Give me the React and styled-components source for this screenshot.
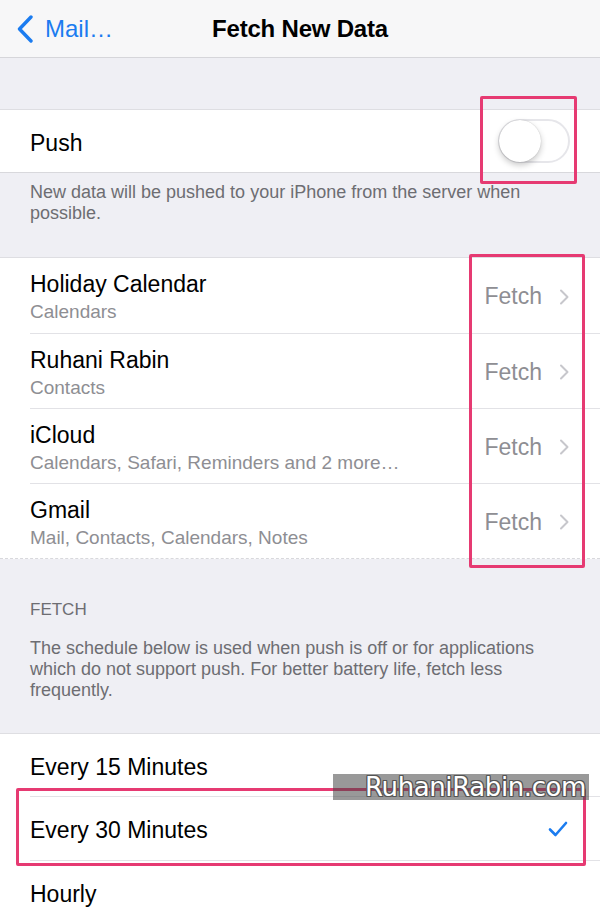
import React from 'react';
import styled, { createGlobalStyle } from 'styled-components';

const GlobalStyle = createGlobalStyle`
    html, body {
        margin: 0;
        padding: 0;
        background: #efeff4;
    }
    body {
        font-family: "Liberation Sans", Arial, sans-serif;
        -webkit-font-smoothing: antialiased;
    }
`;

const accounts = [
    { name: 'Holiday Calendar', detail: 'Calendars' },
    { name: 'Ruhani Rabin', detail: 'Contacts' },
    { name: 'iCloud', detail: 'Calendars, Safari, Reminders and 2 more…' },
    { name: 'Gmail', detail: 'Mail, Contacts, Calendars, Notes' },
];

const schedules = [
    { label: 'Every 15 Minutes' },
    { label: 'Every 30 Minutes', checked: true },
    { label: 'Hourly' },
];

const BackChevron = () => (
    <svg width="18" height="28" viewBox="0 0 18 28">
        <path d="M15 2 L3.5 14 L15 26" fill="none" stroke="#1b7cf0" strokeWidth="3.4" strokeLinecap="round" strokeLinejoin="round" />
    </svg>
);

const Disclosure = () => (
    <svg width="10" height="16" viewBox="0 0 10 16">
        <path d="M2 1.5 L8.5 8 L2 14.5" fill="none" stroke="#c7c7cc" strokeWidth="2" strokeLinecap="round" strokeLinejoin="round" />
    </svg>
);

const Check = () => (
    <svg width="20" height="16" viewBox="0 0 20 16">
        <path d="M2 8.5 L7.5 14 L18 2" fill="none" stroke="#1b7cf0" strokeWidth="2.6" strokeLinecap="round" strokeLinejoin="round" />
    </svg>
);

const App = () => {
    return (
        <Page>
            <GlobalStyle />
            <NavBar>
                <BackButton><BackChevron /><span>Mail…</span></BackButton>
                <Title>Fetch New Data</Title>
            </NavBar>

            <Group $top={51}>
                <PlainRow>
                    <RowLabel>Push</RowLabel>
                    <Toggle><Knob /></Toggle>
                </PlainRow>
            </Group>
            <GroupFooter $top={9} $bottom={33}>
                New data will be pushed to your iPhone from the server when possible.
            </GroupFooter>

            <Group $dashed>
                {accounts.map((a) => (
                    <AccountRow key={a.name}>
                        <div>
                            <RowLabel>{a.name}</RowLabel>
                            <Detail>{a.detail}</Detail>
                        </div>
                        <Value>Fetch <Disclosure /></Value>
                    </AccountRow>
                ))}
            </Group>

            <SectionHeader>FETCH</SectionHeader>
            <GroupFooter $top={17} $bottom={32}>
                The schedule below is used when push is off or for applications which do not support push. For better battery life, fetch less frequently.
            </GroupFooter>

            <Group>
                {schedules.map((s) => (
                    <PlainRow key={s.label}>
                        <RowLabel>{s.label}</RowLabel>
                        {s.checked && <Check />}
                    </PlainRow>
                ))}
            </Group>

            <Highlight style={{ left: 480, top: 96, width: 97, height: 88 }} />
            <Highlight style={{ left: 469, top: 254, width: 116, height: 314 }} />
            <Highlight style={{ left: 16, top: 788, width: 570, height: 78 }} />
            <Watermark>RuhaniRabin.com</Watermark>
        </Page>
    );
};

export default App;

const Page = styled.div`
    position: relative;
    width: 600px;
    height: 924px;
    overflow: hidden;
    background: #efeff4;
`;

const NavBar = styled.header`
    position: relative;
    height: 58px;
    background: #f7f7f8;
    border-bottom: 1px solid #d6d6da;
    box-sizing: border-box;
    display: flex;
    align-items: center;
    justify-content: center;
`;

const BackButton = styled.div`
    position: absolute;
    left: 16px;
    top: 0;
    bottom: 0;
    display: flex;
    align-items: center;
    gap: 11px;
    color: #1b7cf0;
    font-size: 24px;

    svg {
        margin-top: 1px;
    }
`;

const Title = styled.h1`
    margin: 0;
    font-size: 24px;
    font-weight: 700;
    color: #000;
    letter-spacing: -0.2px;
`;

const Group = styled.section`
    margin-top: ${(p) => p.$top || 0}px;
    background: #fff;
    border-top: 1px solid #dedee2;
    border-bottom: 1px ${(p) => (p.$dashed ? 'dashed' : 'solid')} #d8d8dc;
`;

const PlainRow = styled.div`
    height: 62px;
    margin-left: 30px;
    padding-right: 32px;
    display: flex;
    align-items: center;
    justify-content: space-between;
    box-sizing: border-box;

    & + & {
        border-top: 1px solid #e2e2e6;
        height: 64px;
    }
`;

const AccountRow = styled.div`
    height: 75px;
    margin-left: 30px;
    padding-right: 31px;
    display: flex;
    align-items: center;
    justify-content: space-between;
    box-sizing: border-box;

    & + & {
        border-top: 1px solid #e2e2e6;
    }
`;

const RowLabel = styled.div`
    padding-top: 4px;
    font-size: 23px;
    line-height: 27px;
    color: #000;
`;

const Detail = styled.div`
    font-size: 19px;
    line-height: 24px;
    margin-top: 2px;
    color: #8e8e93;
`;

const Value = styled.div`
    display: flex;
    align-items: center;
    gap: 17px;
    padding-top: 2px;
    font-size: 23px;
    color: #8e8e93;
`;

const Toggle = styled.div`
    width: 72px;
    height: 44px;
    margin-right: -2px;
    border-radius: 22px;
    border: 2px solid #e6e6ea;
    box-sizing: border-box;
    background: #fff;
    position: relative;
`;

const Knob = styled.div`
    position: absolute;
    left: -1px;
    top: -1px;
    width: 42px;
    height: 42px;
    border-radius: 50%;
    background: #fff;
    box-shadow: 0 3px 6px rgba(0, 0, 0, 0.22), 0 0 1px rgba(0, 0, 0, 0.25);
`;

const GroupFooter = styled.p`
    margin: 0;
    padding: ${(p) => p.$top}px 60px ${(p) => p.$bottom}px 30px;
    font-size: 18px;
    line-height: 21px;
    color: #6d6d72;
`;

const SectionHeader = styled.h2`
    margin: 0;
    padding: 40px 30px 0;
    font-size: 17px;
    line-height: 22px;
    font-weight: 400;
    color: #6d6d72;
`;

const Highlight = styled.div`
    position: absolute;
    box-sizing: border-box;
    border: 3px solid #e63a72;
    border-radius: 2px;
    pointer-events: none;
`;

const Watermark = styled.div`
    position: absolute;
    left: 333px;
    top: 774px;
    width: 256px;
    height: 26px;
    background: rgba(70, 70, 70, 0.55);
    display: flex;
    align-items: center;
    justify-content: flex-end;
    padding-right: 3px;
    box-sizing: border-box;
    font-family: "DejaVu Sans", Verdana, sans-serif;
    font-size: 26px;
    letter-spacing: -0.4px;
    color: #fff;
    text-shadow: 1px 0 0 #555, -1px 0 0 #555, 0 1px 0 #555, 0 -1px 0 #555, 1px 1px 0 #555, -1px -1px 0 #555, 1px -1px 0 #555, -1px 1px 0 #555;
`;
